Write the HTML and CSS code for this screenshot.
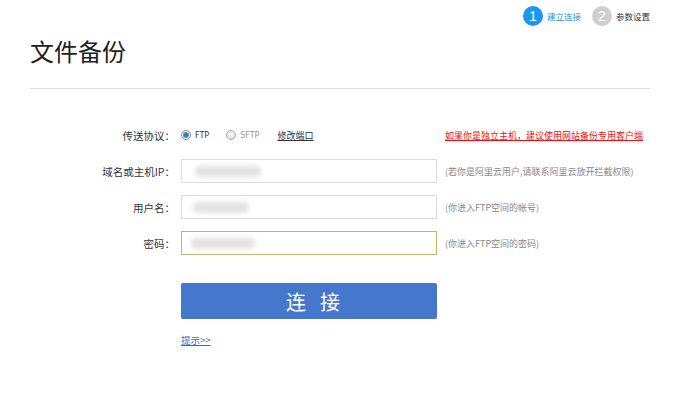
FILE: index.html
```html
<!DOCTYPE html>
<html lang="zh-CN">
<head>
<meta charset="utf-8">
<title>文件备份</title>
<link rel="stylesheet" href="styles.css">
</head>
<body>
<div class="page">
  <div class="steps">
    <div class="step active"><span class="num">1</span><span class="step-text">建立连接</span></div>
    <div class="step"><span class="num">2</span><span class="step-text">参数设置</span></div>
  </div>
  <h1 class="title">文件备份</h1>
  <div class="rule"></div>
  <div class="form">
    <div class="label">传送协议：</div>
    <div class="protocols">
      <span class="radio checked"></span><span class="opt">FTP</span>
      <span class="radio"></span><span class="opt dim">SFTP</span>
      <a class="port" href="#">修改端口</a>
    </div>
    <a class="hint red" href="#">如果你是独立主机，建议使用网站备份专用客户端</a>

    <div class="label">域名或主机IP：</div>
    <div class="field"><input class="input" type="text"><span class="blur b1"></span></div>
    <div class="hint">(若你是阿里云用户,请联系阿里云放开拦截权限)</div>

    <div class="label">用户名：</div>
    <div class="field"><input class="input" type="text"><span class="blur b2"></span></div>
    <div class="hint">(你进入FTP空间的帐号)</div>

    <div class="label">密码：</div>
    <div class="field"><input class="input focus" type="password"><span class="blur b3"></span></div>
    <div class="hint">(你进入FTP空间的密码)</div>

    <div class="spacer"></div>
    <button class="btn" type="button">连接</button>
    <div></div>

    <div></div>
    <a class="tip" href="#">提示&gt;&gt;</a>
    <div></div>
  </div>
</div>
</body>
</html>
```

FILE: styles.css
```css
* { box-sizing: border-box; }
body {
  margin: 0;
  background: #fff;
  font-family: "Noto Sans CJK SC", "Liberation Sans", sans-serif;
  color: #333;
}
.page {
  width: 690px;
  height: 411px;
  padding: 0 40px 0 30px;
}
.steps {
  display: flex;
  justify-content: flex-end;
  gap: 11px;
  padding-top: 6px;
  height: 26px;
}
.step {
  display: flex;
  align-items: center;
  gap: 4px;
  font-size: 8.5px;
  color: #333;
}
.step .num {
  width: 20px;
  height: 20px;
  border-radius: 50%;
  background: #cfcfcf;
  color: #fff;
  font-family: "Liberation Sans", sans-serif;
  font-size: 14px;
  display: flex;
  align-items: center;
  justify-content: center;
}
.step.active .num { background: #1a97ee; }
.step.active .step-text { color: #1a8fe3; }
.title {
  margin: 8px 0 0;
  font-size: 24px;
  font-weight: normal;
  line-height: 34px;
  color: #222;
}
.rule {
  margin-top: 20px;
  height: 1px;
  background: #e2e2e2;
  width: 620px;
}
.form {
  display: grid;
  grid-template-columns: 145px 256px auto;
  grid-template-rows: 24px 24px 24px 24px auto auto;
  column-gap: 6px;
  row-gap: 12px;
  margin-top: 34px;
  align-items: center;
}
.label {
  text-align: right;
  font-size: 10.5px;
  color: #333;
}
.protocols {
  display: flex;
  align-items: center;
  height: 24px;
  font-family: "DejaVu Sans", sans-serif;
  font-size: 8px;
  color: #333;
}
.radio {
  width: 10px;
  height: 10px;
  border-radius: 50%;
  border: 1px solid #aaa;
  background: radial-gradient(circle at 50% 40%, #fafafa, #d6d6d6);
  margin-right: 4px;
}
.radio.checked {
  border-color: #888;
  background: radial-gradient(circle, #1d6fc0 0, #3a93da 2.5px, #fff 3.5px, #e8e8e8 5px);
}
.opt { margin-right: 17px; }
.opt.dim { color: #999; margin-right: 18px; }
.port {
  font-family: "Noto Sans CJK SC", sans-serif;
  font-size: 9px;
  color: #333;
  text-decoration: underline;
}
.hint {
  font-size: 9px;
  color: #888;
  white-space: nowrap;
  margin-left: 2px;
}
.hint.red {
  color: #f01010;
  text-decoration: underline;
}
.field { position: relative; height: 24px; }
.input {
  display: block;
  width: 256px;
  height: 24px;
  border: 1px solid #dcdcdc;
  margin: 0;
  padding: 0 8px;
  outline: none;
  background: #fff;
}
.input.focus { border-color: #c8b36a; }
.blur {
  position: absolute;
  top: 7px;
  height: 11px;
  background: #e2e2e2;
  filter: blur(2.5px);
  border-radius: 5px;
}
.b1 { left: 14px; width: 66px; }
.b2 { left: 12px; width: 56px; }
.b3 { left: 10px; width: 64px; }
.btn {
  margin-top: 16px;
  width: 256px;
  height: 36px;
  border: none;
  border-radius: 2px;
  background: #4577cc;
  color: #fff;
  font-family: "Noto Sans CJK SC", sans-serif;
  font-size: 20px;
  letter-spacing: 14px;
  padding: 0 0 0 22px;
}
.tip {
  margin-top: 2px;
  font-size: 9.5px;
  color: #1a73d9;
  text-decoration: underline;
  justify-self: start;
}
```
